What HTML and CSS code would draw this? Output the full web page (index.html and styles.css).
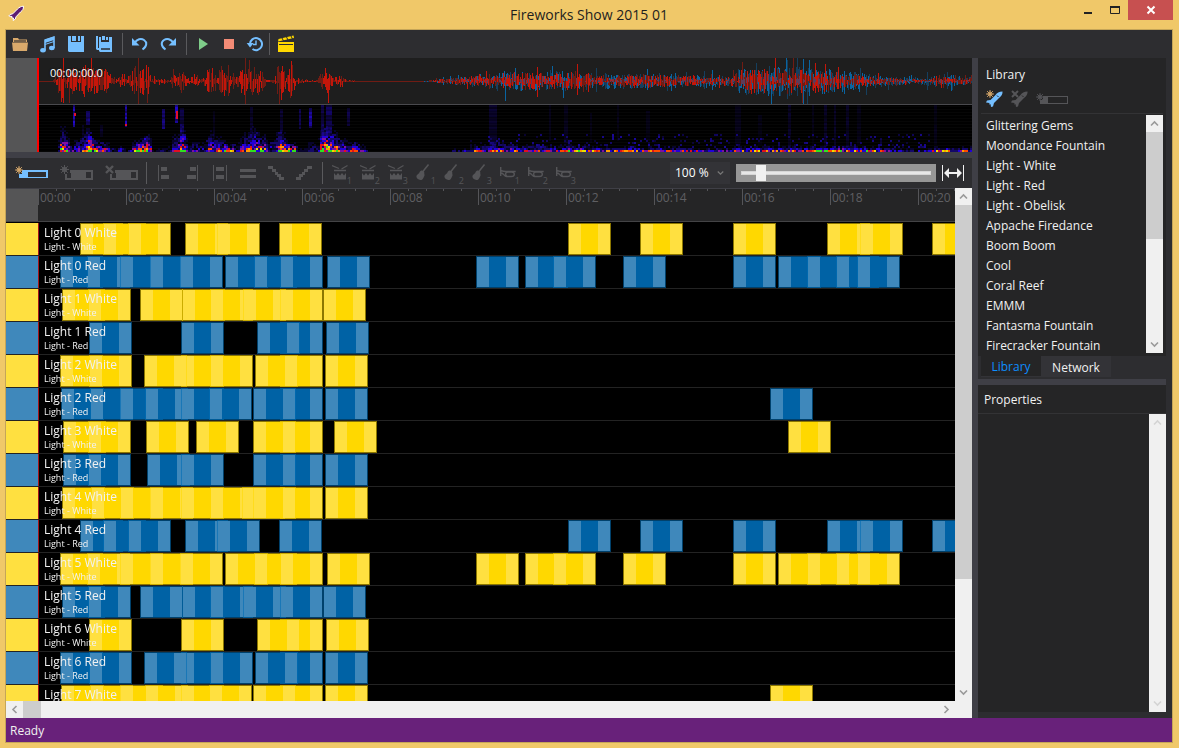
FILE: index.html
```html
<!DOCTYPE html>
<html lang="en">
<head>
<meta charset="utf-8">
<title>Fireworks Show 2015 01</title>
<link rel="stylesheet" href="styles.css">
</head>
<body>
<svg class="defs" aria-hidden="true">
  <symbol id="spark" viewBox="0 0 9 9"><path d="M4.5 0V9M0 4.5H9M1.2 1.2L7.8 7.8M7.8 1.2L1.2 7.8" fill="none" stroke="currentColor" stroke-width="1"/><circle cx="4.5" cy="4.5" r="2.2" fill="none" stroke="currentColor"/></symbol>
  <symbol id="rocket" viewBox="0 0 17 16"><path d="M16.5 0.5C13 0.5 11 2 9.5 4L4.5 9 1 9.5 0 11.5 3.5 12 3.2 13.5 4.6 13.3 5 16 7 15.5 8 12 13 7C15.5 5 16.8 3 16.5 0.5Z" fill="currentColor"/><path d="M11 4.5l1.500 1.500" stroke="#252526" stroke-width="1"/></symbol>
  <symbol id="drum" viewBox="0 0 20 18"><path d="M0 1.5L7 4.5M15.5 1.5L9.5 5M2 6.5H14" stroke="currentColor" stroke-width="1.300" fill="none"/><path d="M2 9l2 2.500 2-2.500 2 2.500L10 9l2 2.500L14 9v6.500H2z" fill="currentColor"/></symbol>
  <symbol id="guitar" viewBox="0 0 20 18"><path d="M12.5 0.5L6.5 8" stroke="currentColor" stroke-width="1.500"/><path d="M4.5 7c1.300-1 2 0 3 .2s.8 1.600.8 2.500.7 1-.1 2.500-1.200 3.800-3.700 3.800S.3 13.800.4 12.300 2.500 10 3 9.300s.5-1.500 1.500-2.300z" fill="currentColor"/></symbol>
  <symbol id="horn" viewBox="0 0 20 18"><path d="M.7 3v9M.7 6.500c2 .7 3 1 5 1h10M1 9c3 0 3 3.500 5.500 3.500h5c3.500 0 4-4.500 0-4.500H8c-3 0-3 3-1 4.500" stroke="currentColor" stroke-width="1.400" fill="none"/></symbol>
  <symbol id="up" viewBox="0 0 9 7"><path d="M1 5.500L4.500 2 8 5.500" fill="none" stroke="currentColor" stroke-width="1.600"/></symbol>
  <symbol id="down" viewBox="0 0 9 7"><path d="M1 1.500L4.500 5 8 1.500" fill="none" stroke="currentColor" stroke-width="1.600"/></symbol>
  <symbol id="left" viewBox="0 0 7 9"><path d="M5.500 1L2 4.500 5.500 8" fill="none" stroke="currentColor" stroke-width="1.600"/></symbol>
  <symbol id="right" viewBox="0 0 7 9"><path d="M1.500 1L5 4.500 1.500 8" fill="none" stroke="currentColor" stroke-width="1.600"/></symbol>
</svg>
<div class="window">
  <header class="titlebar">
    <svg class="logo" width="17" height="17" viewBox="0 0 17 17"><path d="M15.500 1.200C13 1.200 11 2.500 9.500 4L4.800 8.800 2 9.500.800 11 4 11.500 3.800 13 5.500 13 5.200 15.600 7.300 14 8 11.800 12.500 7C15 5 15.500 4 15.500 1.200Z" fill="#5b1c73" stroke="#fff" stroke-width="1"/></svg>
    <h1>Fireworks Show 2015 01</h1>
    <div class="caption">
      <button class="cap" aria-label="Minimize"><svg width="10" height="10" viewBox="0 0 10 10"><path d="M1 8h8" stroke="#222" stroke-width="2"/></svg></button>
      <button class="cap" aria-label="Maximize"><svg width="10" height="10" viewBox="0 0 10 10"><path d="M.5 2v6.500h9V1M0 1.500h10" stroke="#222" fill="none"/><path d="M0 2h10" stroke="#222" stroke-width="2"/></svg></button>
      <button class="cap close" aria-label="Close"><svg width="8" height="8" viewBox="0 0 8 8"><path d="M.5.500l7 7M7.500.500l-7 7" stroke="#fff" stroke-width="2"/></svg></button>
    </div>
  </header>
  <div class="client">
    <nav class="toolbar main-tools" aria-label="Main">
      <button class="tool" aria-label="Open"><svg width="16" height="16" viewBox="0 0 16 16"><path d="M1 6V2h5l1 1.500h8V6z" fill="#d9a96b"/><path d="M2 5h12" stroke="#2d2d30" stroke-width="1.200"/><path d="M0 6.500h16L15 15H1z" fill="#d9a96b"/></svg></button>
      <button class="tool" aria-label="Music"><svg width="16" height="17" viewBox="0 0 16 17"><path d="M5 14V4l9-3v11" fill="none" stroke="#75bfff" stroke-width="1.600"/><path d="M5 3.500l9-3v3.500l-9 3z" fill="#75bfff"/><path d="M5 8.500l9-3" stroke="#75bfff"/><ellipse cx="3" cy="14.200" rx="2.800" ry="2.200" fill="#75bfff"/><ellipse cx="11.800" cy="12" rx="2.800" ry="2.200" fill="#75bfff"/></svg></button>
      <button class="tool" aria-label="Save"><svg width="16" height="16" viewBox="0 0 16 16"><path d="M0 0h3v6h10V0h3v16H1l-1-1z" fill="#75bfff"/><path d="M4 0h4v5H4zM10 0h2v5h-2z" fill="#75bfff"/></svg></button>
      <button class="tool" aria-label="Save all"><svg width="16" height="16" viewBox="0 0 16 16"><path d="M0 0h2v12h2v2H1l-1-1z" fill="#75bfff"/><path d="M3 1h2v5h8V1h3v15H4l-1-1z" fill="#75bfff"/><path d="M6 0h3v4H6zM10 1h2v3h-2z" fill="#75bfff"/><path d="M5 13h9" stroke="#2d2d30" stroke-width="1.500"/></svg></button>
      <span class="sep"></span>
      <button class="tool" aria-label="Undo"><svg width="16" height="14" viewBox="0 0 16 14"><path d="M2.500 6C5 2 9 1 12 3s3.500 6-1.500 9.500" fill="none" stroke="#75bfff" stroke-width="2"/><path d="M0 1v7.500h7.500z" fill="#75bfff"/></svg></button>
      <button class="tool" aria-label="Redo"><svg width="16" height="14" viewBox="0 0 16 14"><path d="M13.500 6C11 2 7 1 4 3s-3.500 6 1.500 9.500" fill="none" stroke="#75bfff" stroke-width="2"/><path d="M16 1v7.500H8.500z" fill="#75bfff"/></svg></button>
      <span class="sep"></span>
      <button class="tool narrow" aria-label="Play"><svg width="9" height="12" viewBox="0 0 9 12"><path d="M0 0l9 6-9 6z" fill="#7fcd8a"/></svg></button>
      <button class="tool narrow" aria-label="Stop"><svg width="10" height="10" viewBox="0 0 10 10"><path d="M0 0h10v10H0z" fill="#f38b76"/></svg></button>
      <button class="tool narrow" aria-label="Loop"><svg width="16" height="16" viewBox="0 0 16 16"><path d="M3 8a6 6 0 1 1 2.500 5" fill="none" stroke="#75bfff" stroke-width="2"/><path d="M-.3 7h7L3 11.500z" fill="#75bfff"/><path d="M9 4.500v4H6" fill="none" stroke="#75bfff" stroke-width="1.400"/></svg></button>
      <span class="sep tight"></span>
      <button class="tool" aria-label="Show"><svg width="16" height="16" viewBox="0 0 16 16"><path d="M0 6h16v10H0z" fill="#ffd800"/><path d="M1 8.500h14" stroke="#2d2d30"/><path d="M0 5.500L.5 3 15.500-.5l.5 2.500z" fill="#ffd800"/><path d="M4 2l1.500 3M8.500 1l1.500 3M13 0l1.500 3" stroke="#2d2d30" stroke-width="1"/></svg></button>
    </nav>
    <main class="workspace">
      <section class="editor">
        <div class="overview">
          <div class="gutter"></div>
          <div class="audio">
            <svg id="wave" viewBox="0 0 934 46" preserveAspectRatio="none" shape-rendering="crispEdges"></svg>
            <canvas id="spectrum" width="934" height="47"></canvas>
            <span class="clock">00:00:00.0</span>
            <span class="cursor"></span>
          </div>
        </div>
        <div class="split-row"></div>
        <div class="toolbar edit-tools">
          <button class="tool wide" aria-label="New cue"><svg width="33" height="14" viewBox="0 0 33 14"><path d="M4 4h29v8H4z" fill="#75bfff"/><path d="M13 6h18v5H13z" fill="#2d2d30"/><path d="M0 0h7v8H0z" fill="#2d2d30"/><use href="#spark" width="8" height="8" x="0" y="0" color="#d9a96b"/></svg></button>
          <button class="tool wide" aria-label="New group"><svg width="33" height="16" viewBox="0 0 33 16"><path d="M5 5h28v10H5z" fill="#555558"/><path d="M7 8h4v5H7zM26 7h5v6h-5z" fill="#2d2d30"/><path d="M0 0h10v9H0z" fill="#2d2d30"/><use href="#spark" width="9" height="9" color="#555558"/></svg></button>
          <button class="tool wide" aria-label="Delete group"><svg width="33" height="16" viewBox="0 0 33 16"><path d="M5 5h28v10H5z" fill="#555558"/><path d="M7 8h4v5H7zM26 7h5v6h-5z" fill="#2d2d30"/><path d="M0 0h10v9H0z" fill="#2d2d30"/><path d="M1 1l7 7M8 1L1 8" stroke="#555558" stroke-width="2.400"/></svg></button>
          <span class="sep near"></span>
          <button class="tool" aria-label="Align left"><svg width="12" height="16" viewBox="0 0 12 16"><path d="M.5 0v16" stroke="#555558"/><path d="M3 2h6v4H3zM3 10h8v4H3z" fill="#555558"/></svg></button>
          <button class="tool" aria-label="Align right"><svg width="12" height="16" viewBox="0 0 12 16"><path d="M11.500 0v16" stroke="#555558"/><path d="M4 2h6v4H4zM1 10h9v4H1z" fill="#555558"/></svg></button>
          <button class="tool" aria-label="Same width"><svg width="14" height="16" viewBox="0 0 14 16"><path d="M.5 0v16M13.500 0v16" stroke="#555558"/><path d="M3 2h8v4H3zM3 10h8v4H3z" fill="#555558"/></svg></button>
          <button class="tool" aria-label="Same time"><svg width="16" height="9" viewBox="0 0 16 9"><path d="M0 0h16v3H0zM0 6h16v3H0z" fill="#555558"/></svg></button>
          <button class="tool" aria-label="Step down"><svg width="16" height="14" viewBox="0 0 16 14"><path d="M0 0h5v3H0zM4 3h4v3H4zM7 6h3v3H7zM9 8h4v3H9zM11 11h5v3h-5z" fill="#555558"/></svg></button>
          <button class="tool" aria-label="Step up"><svg width="16" height="14" viewBox="0 0 16 14"><path d="M11 0h5v3h-5zM8 3h4v3H8zM6 6h3v3H6zM3 8h4v3H3zM0 11h5v3H0z" fill="#555558"/></svg></button>
          <span class="sep"></span>
          <button class="tool num"><svg width="20" height="18"><use href="#drum"/></svg><sub>1</sub></button>
          <button class="tool num"><svg width="20" height="18"><use href="#drum"/></svg><sub>2</sub></button>
          <button class="tool num"><svg width="20" height="18"><use href="#drum"/></svg><sub>3</sub></button>
          <button class="tool num"><svg width="20" height="18"><use href="#guitar"/></svg><sub>1</sub></button>
          <button class="tool num"><svg width="20" height="18"><use href="#guitar"/></svg><sub>2</sub></button>
          <button class="tool num"><svg width="20" height="18"><use href="#guitar"/></svg><sub>3</sub></button>
          <button class="tool num"><svg width="20" height="18"><use href="#horn"/></svg><sub>1</sub></button>
          <button class="tool num"><svg width="20" height="18"><use href="#horn"/></svg><sub>2</sub></button>
          <button class="tool num"><svg width="20" height="18"><use href="#horn"/></svg><sub>3</sub></button>
          <div class="zoom">
            <span class="combo"><select aria-label="Zoom level"><option>100 %</option></select><svg width="7" height="6"><use href="#down"/></svg></span>
            <input class="slider" type="range" min="0" max="100" value="8" aria-label="Zoom">
            <button class="fit" aria-label="Fit width"><svg width="22" height="16" viewBox="0 0 22 16"><path d="M.5 0v16M21.500 0v16" stroke="#f1f1f1" fill="none"/><path d="M4 8h14" stroke="#f1f1f1" stroke-width="2"/><path d="M7 3L2 8l5 5V9.500L6 8l1-1.500zM15 3l5 5-5 5V9.500L16 8l-1-1.500z" fill="#f1f1f1"/></svg></button>
          </div>
        </div>
        <div class="timeline">
          <div class="lanes">
            <div class="ruler"><div class="gutter"></div><div class="ticks" id="ticks"></div></div>
            <div class="tracks" id="tracks"></div>
          </div>
          <div class="vscroll"><button aria-label="Scroll up"><svg width="9" height="7"><use href="#up"/></svg></button><span class="thumb main-thumb"></span><button class="end" aria-label="Scroll down"><svg width="9" height="7"><use href="#down"/></svg></button></div>
        </div>
        <div class="hscroll"><button aria-label="Scroll left"><svg width="7" height="9"><use href="#left"/></svg></button><span class="hthumb"></span><button class="end" aria-label="Scroll right"><svg width="7" height="9"><use href="#right"/></svg></button></div>
      </section>
      <div class="split-col"></div>
      <aside class="side">
        <section class="panel library">
          <h2>Library</h2>
          <div class="lib-tools">
            <button aria-label="Add firework"><svg width="17" height="17" viewBox="0 0 17 17"><use href="#rocket" width="17" height="16" y="1" color="#75bfff"/><use href="#spark" width="8" height="8" color="#d9a96b"/></svg></button>
            <button aria-label="Remove firework"><svg width="17" height="17" viewBox="0 0 17 17"><use href="#rocket" width="17" height="16" y="1" color="#555558"/><path d="M1 1l6 6M7 1L1 7" stroke="#555558" stroke-width="2"/></svg></button>
            <button aria-label="Add cue"><svg width="33" height="11" viewBox="0 0 33 11"><path d="M4 3h28v8H4z" fill="#555558"/><path d="M12 4h19v6H12z" fill="#252526"/><path d="M0 0h7v7H0z" fill="#252526"/><use href="#spark" width="8" height="8" color="#555558"/></svg></button>
          </div>
          <div class="list-wrap">
            <ul class="list">
              <li>Glittering Gems</li><li>Moondance Fountain</li><li>Light - White</li><li>Light - Red</li><li>Light - Obelisk</li><li>Appache Firedance</li><li>Boom Boom</li><li>Cool</li><li>Coral Reef</li><li>EMMM</li><li>Fantasma Fountain</li><li>Firecracker Fountain</li>
            </ul>
            <div class="vscroll"><button aria-label="Scroll up"><svg width="9" height="7"><use href="#up"/></svg></button><span class="thumb list-thumb"></span><button class="end" aria-label="Scroll down"><svg width="9" height="7"><use href="#down"/></svg></button></div>
          </div>
        </section>
        <div class="tabs" role="tablist"><button role="tab" aria-selected="true" class="active">Library</button><button role="tab" aria-selected="false">Network</button></div>
        <div class="split-row"></div>
        <section class="panel properties">
          <h2>Properties</h2>
          <div class="prop-body"><div class="vscroll off"><button disabled aria-label="Scroll up"><svg width="9" height="7"><use href="#up"/></svg></button><button disabled class="end" aria-label="Scroll down"><svg width="9" height="7"><use href="#down"/></svg></button></div></div>
        </section>
      </aside>
    </main>
    <footer class="status">Ready</footer>
  </div>
</div>
<script src="app.js"></script>
</body>
</html>
```

FILE: styles.css
```css
* { box-sizing: border-box; }
html, body { height: 100%; margin: 0; }
body { font: 12px/16px "Open Sans", "Noto Sans", sans-serif; color: #f1f1f1; background: #f0c869; overflow: hidden; }
button { border: 0; padding: 0; margin: 0; background: none; color: inherit; font: inherit; display: flex; align-items: center; justify-content: center; }
svg { display: block; flex: none; overflow: visible; }
h1, h2 { margin: 0; font-weight: 400; }
.defs { position: absolute; width: 0; height: 0; }

.window { height: 100vh; display: flex; flex-direction: column; padding: 0 6px 5px 5px; }
.titlebar { height: 29px; flex: none; display: grid; grid-template-columns: 1fr auto 1fr; align-items: start; }
.logo { margin: 5px 0 0 3px; }
.titlebar h1 { font-size: 14px; line-height: 29px; color: #1e1e1e; }
.caption { display: flex; justify-content: flex-end; }
.cap { width: 27px; height: 20px; }
.cap.close { width: 45px; background: #c75050; }

.client { flex: 1; min-height: 0; display: flex; flex-direction: column; background: #2d2d30; border: 1px solid #c5a558; }
.toolbar { display: flex; align-items: center; flex: none; background: #2d2d30; }
.main-tools { height: 28px; }
.edit-tools { height: 30px; padding-left: 3px; }
.tool { width: 28px; height: 26px; }
.tool.narrow { width: 26px; }
.tool.wide { width: 45px; }
.sep { width: 1px; height: 22px; background: #5a5a5d; margin: 0 3px 0 4px; }
.sep.tight { margin: 0 2px 0 1px; }
.sep.near { margin: 0 3px 0 2px; }
.num { position: relative; padding-left: 4px; color: #555558; }
.num sub { position: absolute; right: 2px; bottom: 1px; font-size: 9px; line-height: 9px; }

.workspace { flex: 1; min-height: 0; display: flex; }
.editor { flex: 1; min-width: 0; display: flex; flex-direction: column; }
.overview { display: flex; height: 94px; flex: none; }
.gutter { width: 32px; flex: none; background: #555556; }
.audio { position: relative; flex: 1; min-width: 0; display: flex; flex-direction: column; background: #1e1e1e; }
#wave { width: 100%; height: 46px; overflow: hidden; }
#spectrum { width: 100%; height: 48px; border-top: 1px solid #4a4a4e; display: block; background: #000; }
.clock { position: absolute; left: 12px; top: 7px; color: #fff; font-size: 11px; text-shadow: 0 0 2px #111; }
.cursor { position: absolute; left: -1px; top: 0; bottom: 0; width: 2px; background: #f00; }
.split-row { height: 6px; flex: none; background: #3f3f46; }
.split-col { width: 6px; flex: none; background: #3f3f46; }

.zoom { margin-left: auto; display: flex; align-items: center; gap: 6px; padding-right: 8px; }
.combo { position: relative; display: flex; background: #333337; }
.combo select { appearance: none; width: 60px; height: 22px; border: 0; padding: 0 0 0 5px; background: none; color: #fff; font: inherit; }
.combo svg { position: absolute; right: 6px; top: 8px; color: #777; }
.slider { appearance: none; width: 200px; height: 18px; margin: 0; padding: 0 5px; background: #969696; }
.slider::-webkit-slider-runnable-track { height: 4px; background: #e7e7e7; border: 1px solid #d6d6d6; }
.slider::-webkit-slider-thumb { appearance: none; width: 10px; height: 16px; margin-top: -7px; background: #f0f0f0; }

.timeline { flex: 1; min-height: 0; display: flex; }
.lanes { flex: 1; min-width: 0; display: flex; flex-direction: column; background: #000; }
.ruler { height: 34px; flex: none; display: flex; background: #252526; border-top: 1px solid #3f3f46; border-bottom: 1px solid #434345; margin-bottom: 1px; }
.ticks { flex: 1; display: flex; overflow: hidden; }
.tick { position: relative; width: 88px; flex: none; height: 16px; border-left: 1px solid #555558; padding-left: 1px; color: #5f5f62; line-height: 17px; }
.tick i { position: absolute; top: 0; width: 1px; height: 2px; background: #555558; }
.tracks { flex: 1; min-height: 0; overflow: hidden; }
.track { display: flex; height: 33px; border-bottom: 1px solid #232323; }
.swatch { width: 32px; flex: none; }
.lane { position: relative; flex: 1; overflow: hidden; border-left: 1px solid #a3141a; }
.white .swatch { background: #ffe040; }
.red .swatch { background: #3f88bb; }
/* Half-transparent edges: dark over the empty lane, invisible where cues overlap. */
.cue { position: absolute; top: 0; width: 43px; height: 32px; border: 1px solid; background-clip: padding-box; }
.white .cue { border-color: rgba(255, 216, 0, .55); background-image: linear-gradient(90deg, #ffe040 0 12px, #ffd800 12px 29px, #ffe040 29px); }
.red .cue { border-color: rgba(0, 108, 180, .6); background-image: linear-gradient(90deg, #3f88bb 0 12px, #0062a5 12px 29px, #3f88bb 29px); }
.label { position: relative; display: flex; flex-direction: column; padding: 2px 0 0 5px; color: #f2f2f2; }
.label small { font-size: 9px; line-height: 12px; }

.vscroll { width: 17px; flex: none; display: flex; flex-direction: column; background: #f0f0f0; color: #9a9a9a; }
.vscroll button { height: 17px; width: 17px; }
.vscroll .end { margin-top: auto; }
.thumb { background: #cdcdcd; }
.main-thumb { flex: 0 1 73%; }
.list-thumb { flex: 0 0 45%; }
.vscroll.off { color: #d4d4d4; }
.hscroll { height: 17px; flex: none; display: flex; align-items: center; padding-right: 17px; background: #f0f0f0; color: #9a9a9a; }
.hscroll button { width: 17px; height: 17px; }
.hscroll .end { margin-left: auto; }
.hthumb { width: 18px; height: 17px; background: #cdcdcd; }

.side { width: 194px; flex: none; display: flex; flex-direction: column; padding: 0 6px 6px 0; }
.panel { background: #252526; display: flex; flex-direction: column; }
.library { height: 298px; flex: none; padding: 9px 3px 3px; }
.library h2 { font-size: 12px; line-height: 16px; padding-left: 5px; }
.lib-tools { display: flex; align-items: center; gap: 8px; padding: 0 0 0 5px; height: 31px; border-bottom: 1px solid #333335; }
.list-wrap { flex: 1; min-height: 0; display: flex; margin-top: 1px; }
.list { flex: 1; margin: 0; padding: 1px 0 0 5px; list-style: none; overflow: hidden; }
.list li { line-height: 20px; white-space: nowrap; }
.tabs { height: 23px; flex: none; display: flex; align-items: flex-start; padding-left: 3px; }
.tabs button { width: 70px; height: 21px; padding-top: 2px; background: #333337; }
.tabs .active { width: 60px; background: #252526; color: #0e8eff; border-bottom: 1px solid #333337; }
.properties { flex: 1; min-height: 0; }
.properties h2 { font-size: 12px; line-height: 26px; padding: 2px 0 0 6px; border-bottom: 1px solid #333335; }
.prop-body { flex: 1; display: flex; justify-content: flex-end; }
.status { height: 24px; flex: none; background: #68217a; padding-left: 4px; line-height: 25px; }
```

FILE: app.js
```js
// Cue start positions, in timeline pixels measured from the window edge.
const ORIGIN = 39;
const a = [80, 103, 128, 185, 217, 279, 568, 640, 733, 827, 860, 932];
const b = [60, 87, 120, 150, 180, 225, 254, 280, 327, 476, 525, 553, 623, 733, 778, 807, 836, 857];
const c = [62, 88, 140, 182, 210, 243, 280, 323];
const d = [89, 181, 280, 257, 326];
const e = [60, 89, 181, 144, 210, 280, 255, 325];
const f = [61, 90, 120, 145, 181, 209, 280, 253, 325];
const rows = [
  ["0 White", a], ["0 Red", b], ["1 White", c], ["1 Red", d], ["2 White", e],
  ["2 Red", f.concat(770)],
  ["3 White", [63, 88, 146, 196, 280, 253, 334, 788]],
  ["3 Red", [63, 88, 147, 181, 280, 253, 325]],
  ["4 White", [62, 91, 120, 150, 181, 210, 242, 280, 253, 325]],
  ["4 Red", a], ["5 White", b], ["5 Red", c], ["6 White", d], ["6 Red", e],
  ["7 White", f.concat(770)]
];
document.getElementById("tracks").innerHTML = rows.map(([name, cues]) => {
  const kind = name.split(" ")[1];
  return `<div class="track ${kind.toLowerCase()}"><span class="swatch"></span><div class="lane">` +
    cues.map(x => `<span class="cue" style="left:${x - ORIGIN}px"></span>`).join("") +
    `<div class="label"><span>Light ${name}</span><small>Light - ${kind}</small></div></div></div>`;
}).join("");

let ticks = "";
for (let s = 0; s <= 20; s += 2) {
  ticks += `<div class="tick">00:${String(s).padStart(2, "0")}` +
    [20, 40, 60, 80].map(p => `<i style="left:${p}%"></i>`).join("") + "</div>";
}
document.getElementById("ticks").innerHTML = ticks;

let seed = 7;
const rnd = () => (seed = (seed * 16807) % 2147483647) / 2147483647;
const lerp = (pts, x) => {
  for (let i = 1; i < pts.length; i++) {
    if (x <= pts[i][0]) {
      const [x0, y0] = pts[i - 1], [x1, y1] = pts[i];
      return y0 + (y1 - y0) * (x - x0) / (x1 - x0);
    }
  }
  return 0;
};

// Loudness over time: [x, amplitude].
const red = [[38,0],[51,0],[54,3],[57,6],[59,18],[62,22],[66,12],[78,14],[88,18],[96,14],[106,13],[111,6],[117,2],[121,8],[124,4],[129,6],[133,12],[136,24],[142,16],[147,20],[151,3],[164,2],[170,2],[173,10],[176,3],[181,15],[185,6],[190,4],[193,4],[197,6],[200,1],[205,6],[209,13],[220,16],[227,19],[232,13],[235,4],[239,8],[242,24],[247,12],[251,14],[255,20],[260,12],[264,8],[267,1],[274,2],[276,10],[279,25],[284,12],[290,14],[294,12],[296,1],[304,4],[309,1],[316,1],[321,9],[326,16],[330,8],[334,3],[340,7],[347,1],[354,2],[356,0],[425,0],[432,2],[445,4],[460,6],[480,8],[500,8],[525,13],[560,12],[575,15],[590,11],[605,6],[625,10],[650,11],[675,7],[692,9],[700,4],[715,6],[731,8],[737,15],[755,20],[775,18],[790,20],[820,16],[835,14],[850,10],[880,6],[910,4],[930,2],[936,8],[950,5],[972,5]];
const blue = [[38,0],[412,0],[430,1],[460,7],[485,9],[495,14],[508,16],[525,15],[570,14],[590,13],[625,12],[650,11],[680,8],[710,10],[730,7],[740,22],[785,22],[820,20],[850,14],[880,8],[910,5],[940,9],[972,6]];
const paths = { "#0a64a0": "", "#153f5e": "", "#701c14": "", "#c4160a": "", "#5c3c58": "" };
for (let x = 38; x < 972; x++) {
  const B = lerp(blue, x), R = lerp(red, x);
  const bar = (amp, color, k) => {
    const peak = (rnd() < 0.12 ? 1.5 : 0.8) * k;
    const t = 23 - amp * rnd() * peak, h = amp * rnd() * peak + 23 - t;
    if (h > 0.4) paths[color] += `M${x - 37.5} ${t.toFixed(1)}v${Math.max(1, h).toFixed(1)}`;
  };
  bar(B, rnd() < 0.5 ? "#0a64a0" : "#153f5e", 0.85);
  bar(R, rnd() < 0.5 ? "#701c14" : "#c4160a", x < 400 ? 1.25 : 0.85);
  if (x > 420 && rnd() < 0.4) bar(R * 0.4, "#5c3c58", 0.8);
}
document.getElementById("wave").innerHTML = `<path d="M0 23.5H934" stroke="#701c14"/>` +
  Object.entries(paths).map(([k, v]) => `<path d="${v}" stroke="${k}" fill="none"/>`).join("");

// Spectrum: low bands along the bottom edge, faint bursts above.
const ctx = document.getElementById("spectrum").getContext("2d");
const bass = [[38,0],[57,0],[60,.8],[66,.8],[70,.4],[84,.45],[87,.9],[92,.7],[106,.6],[110,.2],[117,.2],[121,.4],[125,.1],[131,.3],[134,.8],[150,.9],[152,.1],[170,.15],[173,.5],[177,.4],[180,1],[184,.8],[187,.1],[196,.4],[204,.2],[209,.7],[215,.5],[231,.7],[235,.2],[243,.6],[248,.6],[251,.9],[264,.8],[267,.2],[274,.4],[279,1],[286,.8],[294,.8],[297,.1],[318,.2],[321,1],[332,1],[340,.8],[346,.5],[353,.6],[361,.3],[370,0],[440,0],[450,.12],[470,.2],[474,.5],[484,.35],[495,.5],[530,.45],[560,.4],[567,.7],[590,.6],[620,.45],[637,.65],[645,.4],[650,.5],[680,.45],[700,.3],[730,.3],[735,.65],[752,.6],[790,.5],[830,.75],[870,.65],[885,.4],[900,.2],[930,.2],[935,.6],[972,.4]];
const tall = [[38,2],[60,9],[66,8],[72,4],[88,12],[95,5],[130,3],[147,8],[152,3],[181,10],[200,4],[209,9],[230,3],[250,10],[262,6],[279,9],[290,3],[325,10],[345,5],[400,2],[480,3],[495,5],[520,3],[560,3],[600,2],[972,2]];
const palette = ["#08042c", "#140768", "#2200d8", "#8010a0", "#e01020", "#ff4a00", "#ff9c00", "#e8e000", "#30e020"];
for (let y = 1; y < 47; y += 3) { ctx.fillStyle = "#060606"; ctx.fillRect(0, y, 934, 1); }
for (let x = 38; x < 972; x += 2) {
  const e0 = lerp(bass, x), t0 = lerp(tall, x);
  for (let h = 0; h < 34; h += 2) {
    const v = e0 * Math.exp(-h / t0) * (0.3 + rnd() * 1.4) - rnd() * 0.06;
    if (v < 0.06) continue;
    ctx.fillStyle = palette[Math.min(8, Math.floor(v * (h ? 8 : 8.5)))];
    ctx.fillRect(x - 38, 45 - h, 2, 2);
  }
}
const streaks = [[73,2,0,22,.9],[86,4,6,14,.5],[125,2,0,22,.9],[162,3,4,20,.6],[175,3,0,17,.9],[180,4,3,32,.35],[299,2,4,20,.4],[309,3,3,20,.8],[321,3,0,32,.35],[326,6,0,32,.45],[347,3,3,18,.35],[82,2,20,26,.2],[100,3,20,12,.2],[213,2,6,28,.15],[250,3,2,30,.2],[280,3,4,24,.25],[489,8,0,40,.22],[549,2,0,35,.12],[564,4,0,40,.14],[590,2,8,30,.1],[617,2,0,35,.12],[646,4,6,30,.1],[735,6,0,40,.12],[758,4,10,30,.1],[788,3,0,44,.2],[812,2,0,40,.12],[824,3,0,42,.2],[834,2,0,42,.2],[846,3,0,42,.18],[857,4,0,40,.12],[934,3,0,40,.12]];
for (const [x, w, y, h, s] of streaks) {
  for (let i = 0; i < h; i += 2) {
    ctx.fillStyle = `rgba(40,10,230,${s * (0.4 + rnd() * 0.6)})`;
    ctx.fillRect(x - 38, y + i, w, 2);
  }
}
ctx.fillStyle = "#e01030";
ctx.fillRect(36, 8, 2, 3);
ctx.fillRect(87, 19, 2, 2);
ctx.fillRect(138, 6, 2, 8);
for (let x = 470; x < 930; x += 2) {
  for (let h = 4; h < 18; h += 2) {
    if (rnd() < 0.2 - h * 0.008) { ctx.fillStyle = `rgba(36,10,220,${0.2 + rnd() * 0.5})`; ctx.fillRect(x - 38, 45 - h, 2, 2); }
  }
}
```
